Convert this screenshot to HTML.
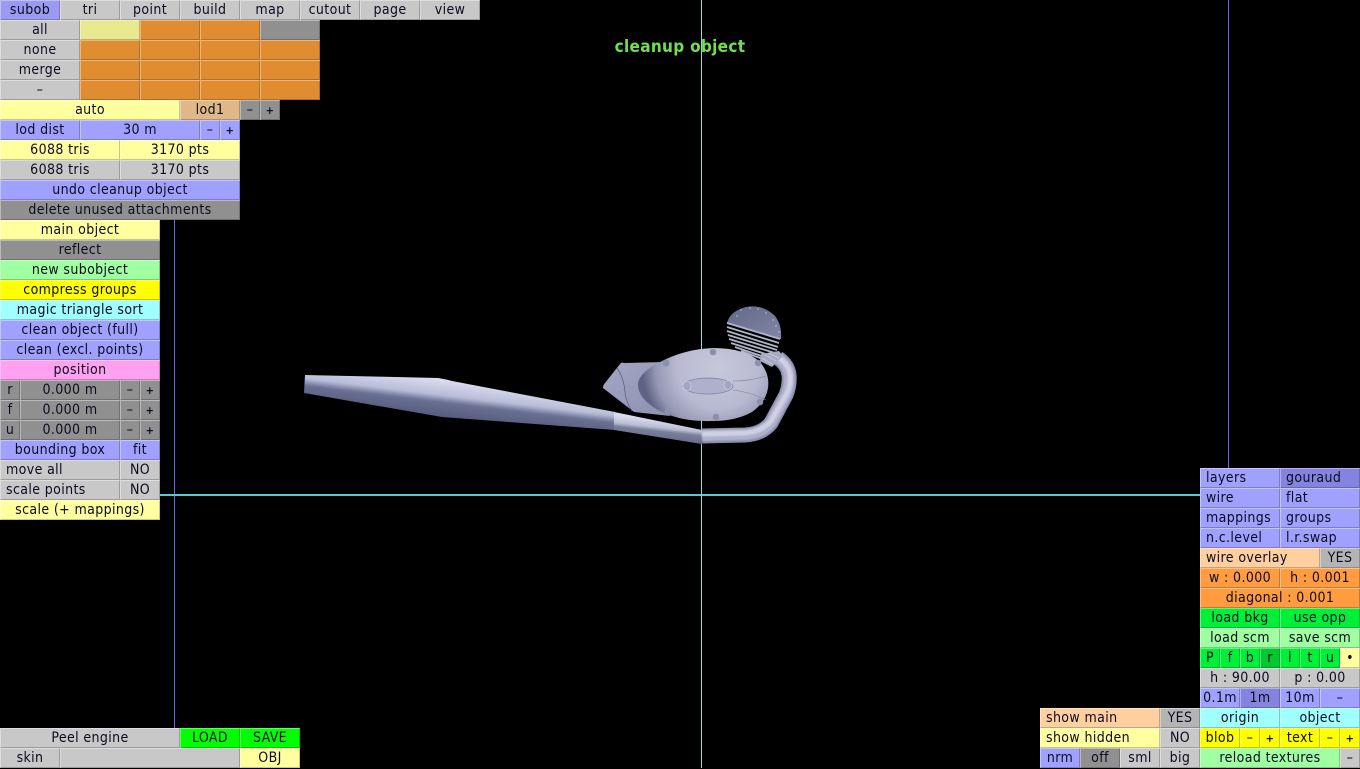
<!DOCTYPE html>
<html><head><meta charset="utf-8"><title>cleanup object</title>
<style>
html,body{margin:0;padding:0;background:#000;width:1360px;height:768px;overflow:hidden}
.b{position:absolute;height:20px;line-height:21px;box-sizing:border-box;text-align:center;color:#0c0c20;white-space:nowrap;
font-family:"DejaVu Sans","Liberation Sans",sans-serif;font-stretch:condensed;font-size:14px;letter-spacing:.38px;
box-shadow:inset 1px 1px 0 rgba(255,255,255,.38),inset -1px -1px 0 rgba(0,0,0,.22)}
.l{text-align:left;padding-left:6px}
.f{font-size:11px;font-weight:bold}
.g{background:#c8c8c8}.d{background:#909090}.y{background:#ffffa0}.u{background:#a0a0ff}.s{background:#8484e0}
.o{background:#e08c30}.q{background:#ff9c40}.n{background:#00f038}.m{background:#a0ffa0}.c{background:#a0ffff}
.p{background:#ffa0f0}.h{background:#ffcfa0}.t{background:#e0b888}.v{background:#ffff00}.e{background:#e8e890}.k{background:#00c830}
.line{position:absolute}
#title{position:absolute;left:580px;top:36px;width:200px;text-align:center;color:#70e050;font:bold 17px/22px "DejaVu Sans","Liberation Sans",sans-serif;font-stretch:condensed;letter-spacing:.3px;white-space:nowrap}
svg{position:absolute;left:0;top:0}
</style></head><body>
<div class="line" style="left:174px;top:220px;width:1px;height:508px;background:#6a6ae8"></div>
<div class="line" style="left:1228px;top:0;width:1px;height:468px;background:#6a6ae8"></div>
<div class="line" style="left:160px;top:494px;width:1040px;height:2px;background:#58c8d4"></div>
<div class="line" style="left:701px;top:0;width:1px;height:768px;background:#80e0e8"></div>

<svg width="1360" height="768" viewBox="0 0 1360 768">
<defs>
<linearGradient id="x2" gradientUnits="userSpaceOnUse" x1="462.400" y1="382" x2="457.600" y2="422"><stop offset="0" stop-color="#dcdcf0"/><stop offset=".38" stop-color="#b8bcd8"/><stop offset=".56" stop-color="#6a7092"/><stop offset="1" stop-color="#525878"/></linearGradient>
<linearGradient id="x3" gradientUnits="userSpaceOnUse" x1="660" y1="420" x2="658" y2="438"><stop offset="0" stop-color="#dcdcf0"/><stop offset=".42" stop-color="#b8bcd8"/><stop offset=".62" stop-color="#7a8098"/><stop offset="1" stop-color="#686e90"/></linearGradient>
<radialGradient id="eg" gradientUnits="userSpaceOnUse" cx="718" cy="368" r="76"><stop offset="0" stop-color="#c8c8dc"/><stop offset=".55" stop-color="#b8b8d0"/><stop offset=".82" stop-color="#9498b4"/><stop offset="1" stop-color="#5e6284"/></radialGradient>
<linearGradient id="bp" x1="0" y1="0" x2="1" y2="1"><stop offset="0" stop-color="#a4a6c4"/><stop offset="1" stop-color="#8e90b2"/></linearGradient>
<linearGradient id="dome" x1="0" y1="0" x2="1" y2="1"><stop offset="0" stop-color="#626888"/><stop offset="1" stop-color="#8286a6"/></linearGradient>
<filter id="bl" x="-10%" y="-10%" width="120%" height="120%"><feGaussianBlur stdDeviation=".9"/></filter>
<filter id="bs" x="-5%" y="-5%" width="110%" height="110%"><feGaussianBlur stdDeviation=".35"/></filter>
</defs>
<!-- back plate -->
<path d="M603 388Q603 385 605 383L620 364Q621 362 624 363L664 362L670 416L634 412Z" fill="url(#bp)"/>
<path d="M617 368Q624 378 625 392Q626 402 632 411" fill="none" stroke="#555a78" stroke-width=".7"/>
<!-- cylinder -->
<g filter="url(#bs)">
<path d="M727 323Q730 311 746 307Q763 304 775 316Q782 325 781 339Z" fill="url(#dome)"/>
<g stroke="#b0b4c8" stroke-width="1.8" fill="none">
<path d="M727 323L780 339"/><path d="M727 327L779 343"/><path d="M727 331L778 347"/><path d="M728 335L777 350"/><path d="M729 339L775 353"/><path d="M731 343L772 356"/><path d="M735 347L770 359"/><path d="M741 351L768 361"/>
</g>
<g fill="#c8cce0"><circle cx="741" cy="310" r=".7"/><circle cx="750" cy="308" r=".7"/><circle cx="758" cy="309" r=".7"/><circle cx="766" cy="313" r=".7"/><circle cx="773" cy="320" r=".7"/><circle cx="776" cy="326" r=".7"/><circle cx="737" cy="316" r=".7"/><circle cx="779" cy="332" r=".7"/></g>
</g>
<!-- muffler / pipe -->
<path d="M305 375L438 378Q445 379 452 381L615 412L615 430L442 417L304 393Z" fill="url(#x2)" filter="url(#bs)"/>
<path d="M614 412L702 430L702 444L614 430Z" fill="url(#x3)" filter="url(#bs)"/>
<!-- bend -->
<g fill="none" stroke-linecap="butt" stroke-linejoin="round">
<path d="M702 436L745 435Q762 434 771 423L786 395Q790 385 789 375Q788 365 778 358" stroke="#8a8eac" stroke-width="15"/>
<path d="M702 435.500L745 434.500Q762 433.500 771 422.500L786 394.500Q790 385 789 375Q788 365 778 358" stroke="#b0b2cc" stroke-width="11" filter="url(#bl)"/>
<path d="M702 434L745 433Q761 432 771 421L787 393Q791 385 790 375Q789 365 779 358" stroke="#d0d0e4" stroke-width="5" filter="url(#bl)"/>
</g>
<!-- collar -->
<path d="M761 354L779 351L783 356L772 367L760 361Z" fill="#a8aac4"/>
<path d="M765 355L776 361M762 358L772 364M768 353L779 358" stroke="#d0d2e0" stroke-width=".7"/>
<!-- cover -->
<path d="M638 383Q640 372 660 362Q685 349 713 348Q745 348 760 362Q770 374 768 388Q766 402 752 412Q736 421 712 421Q680 422 658 410Q637 398 638 383Z" fill="url(#eg)" filter="url(#bs)"/>
<ellipse cx="708" cy="386" rx="25" ry="8" fill="#aeb0cc" stroke="#7a7e9e" stroke-width=".7"/>
<ellipse cx="687" cy="386" rx="4" ry="4.500" fill="#a2a4c2" stroke="#d8d8e8" stroke-width=".6"/>
<ellipse cx="728" cy="385" rx="4" ry="4.500" fill="#a2a4c2" stroke="#d8d8e8" stroke-width=".6"/>
<path d="M733 381Q750 381 766 376M733 390Q750 392 766 400" fill="none" stroke="#7c80a0" stroke-width=".6"/>
<g fill="#8c90ac" filter="url(#bs)">
<circle cx="666" cy="363" r="3.500"/><circle cx="713" cy="352" r="3.300"/><circle cx="758" cy="363" r="3.200"/><circle cx="760" cy="402" r="3.300"/><circle cx="716" cy="417" r="3.300"/><circle cx="668" cy="411" r="3.300"/>
</g>
</svg>
<div id="title">cleanup object</div>

<!-- top tabs -->
<div class="b s" style="left:0;top:0;width:60px;background:#9a9af0">subob</div>
<div class="b g" style="left:60px;top:0;width:60px">tri</div>
<div class="b g" style="left:120px;top:0;width:60px">point</div>
<div class="b g" style="left:180px;top:0;width:60px">build</div>
<div class="b g" style="left:240px;top:0;width:60px">map</div>
<div class="b g" style="left:300px;top:0;width:60px">cutout</div>
<div class="b g" style="left:360px;top:0;width:60px">page</div>
<div class="b g" style="left:420px;top:0;width:60px">view</div>

<div class="b g" style="left:0;top:20px;width:80px">all</div>
<div class="b e" style="left:80px;top:20px;width:60px"></div>
<div class="b o" style="left:140px;top:20px;width:60px"></div>
<div class="b o" style="left:200px;top:20px;width:60px"></div>
<div class="b d" style="left:260px;top:20px;width:60px"></div>
<div class="b g" style="left:0;top:40px;width:80px">none</div>
<div class="b o" style="left:80px;top:40px;width:60px"></div>
<div class="b o" style="left:140px;top:40px;width:60px"></div>
<div class="b o" style="left:200px;top:40px;width:60px"></div>
<div class="b o" style="left:260px;top:40px;width:60px"></div>
<div class="b g" style="left:0;top:60px;width:80px">merge</div>
<div class="b o" style="left:80px;top:60px;width:60px"></div>
<div class="b o" style="left:140px;top:60px;width:60px"></div>
<div class="b o" style="left:200px;top:60px;width:60px"></div>
<div class="b o" style="left:260px;top:60px;width:60px"></div>
<div class="b g" style="left:0;top:80px;width:80px">–</div>
<div class="b o" style="left:80px;top:80px;width:60px"></div>
<div class="b o" style="left:140px;top:80px;width:60px"></div>
<div class="b o" style="left:200px;top:80px;width:60px"></div>
<div class="b o" style="left:260px;top:80px;width:60px"></div>

<div class="b y" style="left:0;top:100px;width:180px">auto</div>
<div class="b t" style="left:180px;top:100px;width:60px">lod1</div>
<div class="b d" style="left:240px;top:100px;width:20px">–</div>
<div class="b d f" style="left:260px;top:100px;width:20px">+</div>
<div class="b u" style="left:0;top:120px;width:80px">lod dist</div>
<div class="b u" style="left:80px;top:120px;width:120px">30 m</div>
<div class="b u" style="left:200px;top:120px;width:20px">–</div>
<div class="b u f" style="left:220px;top:120px;width:20px">+</div>
<div class="b y" style="left:0;top:140px;width:120px">6088 tris</div>
<div class="b y" style="left:120px;top:140px;width:120px">3170 pts</div>
<div class="b g" style="left:0;top:160px;width:120px">6088 tris</div>
<div class="b g" style="left:120px;top:160px;width:120px">3170 pts</div>
<div class="b u" style="left:0;top:180px;width:240px">undo cleanup object</div>
<div class="b d" style="left:0;top:200px;width:240px">delete unused attachments</div>

<div class="b y" style="left:0;top:220px;width:160px">main object</div>
<div class="b d" style="left:0;top:240px;width:160px">reflect</div>
<div class="b m" style="left:0;top:260px;width:160px">new subobject</div>
<div class="b v" style="left:0;top:280px;width:160px">compress groups</div>
<div class="b c" style="left:0;top:300px;width:160px">magic triangle sort</div>
<div class="b u" style="left:0;top:320px;width:160px">clean object (full)</div>
<div class="b u" style="left:0;top:340px;width:160px">clean (excl. points)</div>
<div class="b p" style="left:0;top:360px;width:160px">position</div>
<div class="b d" style="left:0;top:380px;width:20px">r</div>
<div class="b d" style="left:20px;top:380px;width:100px">0.000 m</div>
<div class="b d" style="left:120px;top:380px;width:20px">–</div>
<div class="b d f" style="left:140px;top:380px;width:20px">+</div>
<div class="b d" style="left:0;top:400px;width:20px">f</div>
<div class="b d" style="left:20px;top:400px;width:100px">0.000 m</div>
<div class="b d" style="left:120px;top:400px;width:20px">–</div>
<div class="b d f" style="left:140px;top:400px;width:20px">+</div>
<div class="b d" style="left:0;top:420px;width:20px">u</div>
<div class="b d" style="left:20px;top:420px;width:100px">0.000 m</div>
<div class="b d" style="left:120px;top:420px;width:20px">–</div>
<div class="b d f" style="left:140px;top:420px;width:20px">+</div>
<div class="b u" style="left:0;top:440px;width:120px">bounding box</div>
<div class="b u" style="left:120px;top:440px;width:40px">fit</div>
<div class="b g l" style="left:0;top:460px;width:120px">move all</div>
<div class="b g" style="left:120px;top:460px;width:40px">NO</div>
<div class="b g l" style="left:0;top:480px;width:120px">scale points</div>
<div class="b g" style="left:120px;top:480px;width:40px">NO</div>
<div class="b y" style="left:0;top:500px;width:160px">scale (+ mappings)</div>

<div class="b g" style="left:0;top:728px;width:180px">Peel engine</div>
<div class="b" style="left:180px;top:728px;width:60px;background:#00ff00">LOAD</div>
<div class="b" style="left:240px;top:728px;width:60px;background:#00ff00">SAVE</div>
<div class="b g" style="left:0;top:748px;width:60px">skin</div>
<div class="b g" style="left:60px;top:748px;width:180px"></div>
<div class="b y" style="left:240px;top:748px;width:60px">OBJ</div>

<!-- right panel -->
<div class="b u l" style="left:1200px;top:468px;width:80px">layers</div>
<div class="b s l" style="left:1280px;top:468px;width:80px">gouraud</div>
<div class="b u l" style="left:1200px;top:488px;width:80px">wire</div>
<div class="b u l" style="left:1280px;top:488px;width:80px">flat</div>
<div class="b u l" style="left:1200px;top:508px;width:80px">mappings</div>
<div class="b u l" style="left:1280px;top:508px;width:80px">groups</div>
<div class="b u l" style="left:1200px;top:528px;width:80px">n.c.level</div>
<div class="b u l" style="left:1280px;top:528px;width:80px">l.r.swap</div>
<div class="b h l" style="left:1200px;top:548px;width:120px">wire overlay</div>
<div class="b g" style="left:1320px;top:548px;width:40px;background:#b4b4b4">YES</div>
<div class="b q" style="left:1200px;top:568px;width:80px">w : 0.000</div>
<div class="b q" style="left:1280px;top:568px;width:80px">h : 0.001</div>
<div class="b q" style="left:1200px;top:588px;width:160px">diagonal : 0.001</div>
<div class="b n" style="left:1200px;top:608px;width:80px">load bkg</div>
<div class="b n" style="left:1280px;top:608px;width:80px">use opp</div>
<div class="b m" style="left:1200px;top:628px;width:80px">load scm</div>
<div class="b m" style="left:1280px;top:628px;width:80px">save scm</div>
<div class="b n" style="left:1200px;top:648px;width:20px">P</div>
<div class="b n" style="left:1220px;top:648px;width:20px">f</div>
<div class="b n" style="left:1240px;top:648px;width:20px">b</div>
<div class="b k" style="left:1260px;top:648px;width:20px">r</div>
<div class="b n" style="left:1280px;top:648px;width:20px">l</div>
<div class="b n" style="left:1300px;top:648px;width:20px">t</div>
<div class="b n" style="left:1320px;top:648px;width:20px">u</div>
<div class="b y" style="left:1340px;top:648px;width:20px">•</div>
<div class="b g" style="left:1200px;top:668px;width:80px">h : 90.00</div>
<div class="b g" style="left:1280px;top:668px;width:80px">p : 0.00</div>
<div class="b u" style="left:1200px;top:688px;width:40px">0.1m</div>
<div class="b s" style="left:1240px;top:688px;width:40px">1m</div>
<div class="b u" style="left:1280px;top:688px;width:40px">10m</div>
<div class="b u" style="left:1320px;top:688px;width:40px">–</div>
<div class="b h l" style="left:1040px;top:708px;width:120px">show main</div>
<div class="b" style="left:1160px;top:708px;width:40px;background:#b4b4b4">YES</div>
<div class="b c" style="left:1200px;top:708px;width:80px">origin</div>
<div class="b c" style="left:1280px;top:708px;width:80px">object</div>
<div class="b y l" style="left:1040px;top:728px;width:120px">show hidden</div>
<div class="b g" style="left:1160px;top:728px;width:40px">NO</div>
<div class="b v" style="left:1200px;top:728px;width:40px">blob</div>
<div class="b v" style="left:1240px;top:728px;width:20px">–</div>
<div class="b v f" style="left:1260px;top:728px;width:20px">+</div>
<div class="b v" style="left:1280px;top:728px;width:40px">text</div>
<div class="b v" style="left:1320px;top:728px;width:20px">–</div>
<div class="b v f" style="left:1340px;top:728px;width:20px">+</div>
<div class="b u" style="left:1040px;top:748px;width:40px">nrm</div>
<div class="b d" style="left:1080px;top:748px;width:40px">off</div>
<div class="b g" style="left:1120px;top:748px;width:40px">sml</div>
<div class="b g" style="left:1160px;top:748px;width:40px">big</div>
<div class="b m" style="left:1200px;top:748px;width:140px">reload textures</div>
<div class="b g" style="left:1340px;top:748px;width:20px">–</div>
</body></html>
